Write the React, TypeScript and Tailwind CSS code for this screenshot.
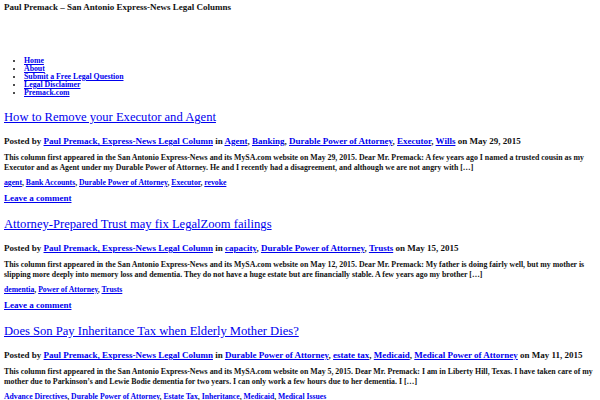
import React from "react";

const A = ({ children }: { children: React.ReactNode }) => (
  <a href="#" className="text-[#0000ee] underline">{children}</a>
);

type Post = {
  title: string;
  cats: string[];
  date: string;
  l1: string;
  l2: string;
  tags: string[];
  comment: boolean;
};

const posts: Post[] = [
  {
    title: "How to Remove your Executor and Agent",
    cats: ["Agent", "Banking", "Durable Power of Attorney", "Executor", "Wills"],
    date: "May 29, 2015",
    l1: "This column first appeared in the San Antonio Express-News and its MySA.com website on May 29, 2015. Dear Mr. Premack: A few years ago I named a trusted cousin as my",
    l2: "Executor and as Agent under my Durable Power of Attorney. He and I recently had a disagreement, and although we are not angry with […]",
    tags: ["agent", "Bank Accounts", "Durable Power of Attorney", "Executor", "revoke"],
    comment: true,
  },
  {
    title: "Attorney-Prepared Trust may fix LegalZoom failings",
    cats: ["capacity", "Durable Power of Attorney", "Trusts"],
    date: "May 15, 2015",
    l1: "This column first appeared in the San Antonio Express-News and its MySA.com website on May 12, 2015. Dear Mr. Premack: My father is doing fairly well, but my mother is",
    l2: "slipping more deeply into memory loss and dementia. They do not have a huge estate but are financially stable. A few years ago my brother […]",
    tags: ["dementia", "Power of Attorney", "Trusts"],
    comment: true,
  },
  {
    title: "Does Son Pay Inheritance Tax when Elderly Mother Dies?",
    cats: ["Durable Power of Attorney", "estate tax", "Medicaid", "Medical Power of Attorney"],
    date: "May 11, 2015",
    l1: "This column first appeared in the San Antonio Express-News and its MySA.com website on May 5, 2015. Dear Mr. Premack: I am in Liberty Hill, Texas. I have taken care of my",
    l2: "mother due to Parkinson’s and Lewie Bodie dementia for two years. I can only work a few hours due to her dementia. I […]",
    tags: ["Advance Directives", "Durable Power of Attorney", "Estate Tax", "Inheritance", "Medicaid", "Medical Issues"],
    comment: false,
  },
];

function List({ items }: { items: string[] }) {
  return (
    <>
      {items.map((c, i) => (
        <React.Fragment key={c}>
          <A>{c}</A>
          {i < items.length - 1 ? ", " : ""}
        </React.Fragment>
      ))}
    </>
  );
}

export default function App() {
  return (
    <div
      className="w-[600px] h-[400px] overflow-hidden bg-white text-[#111] px-[4px] font-bold"
      style={{ fontFamily: '"Liberation Serif", serif' }}
    >
      <div className="pt-[3px] text-[9px] leading-[9px] whitespace-nowrap">
        Paul Premack – San Antonio Express-News Legal Columns
      </div>
      <ul className="mt-[45px] list-disc pl-[20px] text-[7.8px] leading-[8px]">
        <li><A>Home</A></li>
        <li><A>About</A></li>
        <li><A>Submit a Free Legal Question</A></li>
        <li><A>Legal Disclaimer</A></li>
        <li><A>Premack.com</A></li>
      </ul>
      {posts.map((p) => (
        <div key={p.title} className="mt-[12px] whitespace-nowrap">
          <h2 className="font-normal text-[12.6px] leading-[16px]">
            <A>{p.title}</A>
          </h2>
          <div className="mt-[11px] text-[9px] leading-[10px]">
            Posted by <A>Paul Premack, Express-News Legal Column</A> in <List items={p.cats} /> on {p.date}
          </div>
          <div className="mt-[7px] text-[7.85px] leading-[9.5px]">
            <div>{p.l1}</div>
            <div>{p.l2}</div>
          </div>
          <div className="mt-[6px] text-[7.7px] leading-[9px]">
            <List items={p.tags} />
          </div>
          {p.comment && (
            <div className="mt-[6px] text-[9px] leading-[11px]">
              <A>Leave a comment</A>
            </div>
          )}
        </div>
      ))}
    </div>
  );
}
